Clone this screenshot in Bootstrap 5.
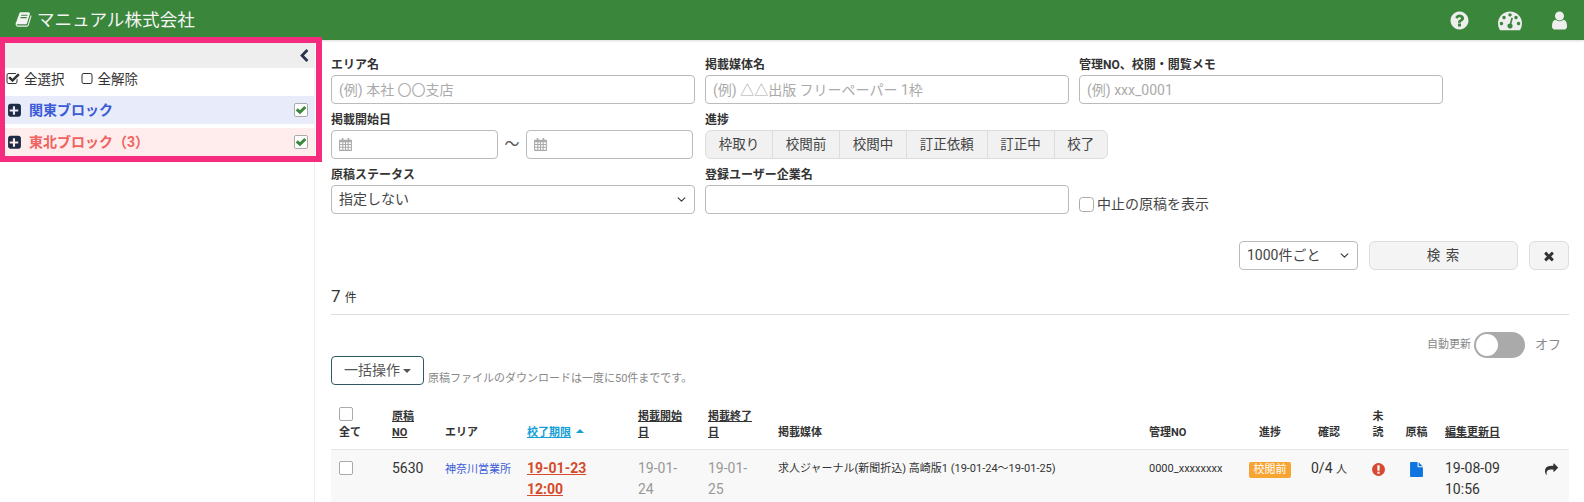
<!DOCTYPE html>
<html lang="ja">
<head>
    <meta charset="UTF-8">
    <title>マニュアル株式会社</title>
    <link href="https://cdn.jsdelivr.net/npm/bootstrap@5.3.0/dist/css/bootstrap.min.css" rel="stylesheet">
    <style>
        html, body { height: 502px; overflow: hidden; }
        body { font-family: Roboto, "Noto Sans CJK JP", sans-serif; font-size: 14px; color: #333; background: #fff; position: relative; }
        svg.ico { fill: currentColor; display: inline-block; flex: none; }

        /* header */
        .top-bar { background: #3a873c; height: 40px; padding: 0 14px 0 15px; color: #f4f4f4; box-shadow: 0 1px 2px rgba(0,0,0,.15); }
        .top-title { font-size: 17.6px; margin-left: 5px; letter-spacing: 0; }
        .top-icons { color: #eee; }
        .top-icons svg:nth-child(1) { margin-right: 28px; }
        .top-icons svg:nth-child(2) { margin-right: 27px; }

        /* side panel */
        .side-panel { width: 315px; height: 462px; border-right: 1px solid #eee; flex: none; padding-left: 5px; }
        .side-head { height: 25px; margin-top: 3px; background: #eee; color: #2b3350; padding-right: 3px; }
        .side-tools { height: 28px; font-size: 13.5px; color: #333; padding: 0 0 6px 1px; }
        .side-tools span { margin-right: 15px; }
        .block-row { height: 28px; padding: 0 6px 0 2px; font-size: 14px; font-weight: 700; }
        .block-row svg { color: #1f2a44; margin-right: 7px; }
        .block-blue { background: #e8ebfa; color: #3b5bd6; margin-bottom: 4px; }
        .block-red { background: #ffecec; color: #f0625f; }
        .green-tick { width: 14px; height: 14px; border: 1px solid #aaa; border-radius: 2px; background: #fff; color: #3a873c; }
        .block-row .green-tick svg { color: #3a873c; margin: 0; }
        /* annotation frame laid over the panel */
        .pink-frame { position: absolute; left: 0; top: 37px; width: 322px; height: 125px; border: 6px solid #f52c7e; border-left-width: 5px; pointer-events: none; }

        /* search form */
        .main-area { padding: 14px 15px 0 16px; min-width: 0; }
        .form-cols { display: grid; grid-template-columns: 364px 364px 364px; column-gap: 10px; }
        .field-cell { height: 55px; }
        .field-label { display: block; height: 21px; font-size: 12px; font-weight: 700; line-height: 22px; color: #333; }
        .main-area .form-control, .main-area .form-select { height: 29px; font-size: 14px; padding: 0 7px; border-color: #bbb; border-radius: 4px; color: #444; }
        .main-area .form-select { background-position: right 7px center; background-size: 11px 9px; }
        .main-area .form-control::placeholder { color: #aaa; }
        .date-box { position: relative; width: 167px; }
        .date-box .form-control { padding-left: 28px; }
        .date-box svg { position: absolute; left: 7px; top: 7px; color: #aaa; }
        .wave { width: 28px; text-align: center; font-size: 15px; color: #555; }
        .step-group { white-space: nowrap; }
        .step-group .btn { flex: none; height: 29px; font-size: 13.5px; padding: 0 12.75px; background: #f1f1f1; border-color: #ddd; color: #444; white-space: nowrap; }
        .stop-check { padding-top: 26px; font-size: 14px; color: #444; }
        .plain-box { width: 15px; height: 15px; margin: 0 3px 0 0; border-color: #aaa; border-radius: 2px; }

        .action-row { margin-top: 22px; }
        .action-row .form-select { width: 119px; }
        .search-btn { width: 149px; height: 29px; margin-left: 11px; padding: 0; font-size: 13.5px; background: #f4f4f4; border-color: #ddd; color: #444; letter-spacing: 1px; }
        .clear-btn { width: 40px; height: 29px; margin-left: 11px; padding: 0; background: #f4f4f4; border-color: #ddd; color: #333; }
        .count-line { margin-top: 16px; height: 28px; border-bottom: 1px solid #ddd; font-size: 17px; line-height: 20px; box-sizing: content-box; padding-bottom: 0; color: #333; }
        .count-line small { font-size: 12px; }

        .auto-line { margin-top: 17px; height: 26px; font-size: 11px; color: #888; padding-right: 8px; }
        .auto-switch { width: 51px; height: 26px; border-radius: 13px; background: #aaa; margin: 0 10px 0 3px; padding: 2px; }
        .auto-switch i { display: block; width: 22px; height: 22px; border-radius: 50%; background: #fff; }
        .auto-off { font-size: 13px; color: #888; }

        .bulk-line { height: 29px; margin-top: -2px; }
        .bulk-btn { width: 93px; height: 29px; padding: 0; font-size: 14px; border: 1px solid #2f5a63; border-radius: 4px; color: #555; background: #fff; }
        .bulk-note { font-size: 11px; color: #888; margin: 0 0 -2px 4px; align-self: flex-end; line-height: 16px; }
        .caret-down { display: inline-block; border: 4px solid transparent; border-top-color: #555; border-bottom: 0; vertical-align: 2px; margin-left: 3px; }

        /* list */
        .doc-table { table-layout: fixed; width: 1238px; margin: 18px 0 0; color: #333; font-size: 14px; }
        .doc-table th { font-size: 11px; line-height: 16px; font-weight: 700; padding: 4px 8px 8px; vertical-align: bottom; border-bottom: 1px solid #e6e6e6; color: #333; }
        .doc-table th u { text-underline-offset: 1px; }
        .doc-table td { background: #f8f8f8; padding: 8px; vertical-align: top; line-height: 21px; border: 0; box-shadow: none; }
        .doc-table .form-check-input { display: block; width: 14px; height: 14px; margin: 0; border-color: #aaa; border-radius: 2px; }
        .doc-table td .form-check-input { margin-top: 3px; }
        .doc-table th.sort-active { color: #14a0d6; }
        .doc-table .edit-cell { padding-left: 11px; padding-right: 0; }
        .sort-mark { display: inline-block; border: 4px solid transparent; border-bottom-color: #14a0d6; border-top: 0; vertical-align: 3px; margin-left: 5px; }
        .area-link { font-size: 11px; color: #3b5bd6; }
        .due-date { color: #d44a2b; font-weight: 700; text-decoration: underline; }
        .date-grey { color: #999; }
        .media-text { font-size: 11px; }
        .manage-no { font-size: 11px; }
        .step-tag { display: inline-block; width: 42px; height: 16px; background: #f6a432; border-radius: 2px; color: #fff; font-size: 11px; line-height: 16px; text-align: center; font-weight: 400; padding: 0; }
        .per-unit { font-size: 11px; }
        .ico-alert { color: #d64a32; }
        .ico-file { color: #0d74e0; }
    </style>
</head>
<body>

    <svg width="0" height="0" class="position-absolute">
        <symbol id="i-book" viewBox="0 0 1792 1792"><path d="M1703 478q40 57 18 129l-275 906q-19 64-76.5 107.5t-122.5 43.5h-923q-77 0-148.5-53.5t-99.5-131.5q-24-67-2-127 0-4 3-27t4-37q1-8-3-21.5t-3-19.5q2-11 8-21t16.5-23.5 16.5-23.5q23-38 45-91.5t30-91.5q3-10 .5-30t-.5-28q3-11 17-28t17-23q21-36 42-92t25-90q1-9-2.5-32t.5-28q4-13 22-30.5t22-22.5q19-26 42.5-84.5t27.5-96.5q1-8-3-25.5t-2-26.5q2-8 9-18t18-23 17-21q8-12 16.5-30.5t15-35 16-36 19.5-32 26.5-23.5 36-11.5 47.5 5.5l-1 3q38-9 51-9h761q74 0 114 56t18 130l-274 906q-36 119-71.5 153.5t-128.5 34.5h-869q-27 0-38 15-11 16-1 43 24 70 144 70h923q29 0 56-15.5t35-41.5l300-987q7-22 5-57 38 15 59 43zm-1064 2q-4 13 2 22.5t20 9.5h608q13 0 25.5-9.5t16.5-22.5l21-64q4-13-2-22.5t-20-9.5h-608q-13 0-25.5 9.5t-16.5 22.5zm-83 256q-4 13 2 22.5t20 9.5h608q13 0 25.5-9.5t16.5-22.5l21-64q4-13-2-22.5t-20-9.5h-608q-13 0-25.5 9.5t-16.5 22.5z"/></symbol>
        <symbol id="i-help" viewBox="0 0 1792 1792"><path d="M1024 1376v-192q0-14-9-23t-23-9h-192q-14 0-23 9t-9 23v192q0 14 9 23t23 9h192q14 0 23-9t9-23zm256-672q0-88-55.5-163t-138.5-116-170-41q-243 0-371 213-15 24 8 42l132 100q7 6 19 6 16 0 25-12 53-68 86-92 34-24 86-24 48 0 85.5 26t37.5 59q0 38-20 61t-68 45q-63 28-115.5 86.5t-52.5 125.5v36q0 14 9 23t23 9h192q14 0 23-9t9-23q0-19 21.5-49.5t54.5-49.5q32-18 49-28.5t46-35 44.5-48 28-60.5 12.5-81zm384 192q0 209-103 385.5t-279.5 279.5-385.5 103-385.5-103-279.5-279.5-103-385.5 103-385.5 279.5-279.5 385.5-103 385.5 103 279.5 279.5 103 385.5z"/></symbol>
        <symbol id="i-gauge" viewBox="0 0 1792 1792"><path d="M384 1152q0-53-37.5-90.5t-90.5-37.5-90.5 37.5-37.5 90.5 37.5 90.5 90.5 37.5 90.5-37.5 37.5-90.5zm192-448q0-53-37.5-90.5t-90.5-37.5-90.5 37.5-37.5 90.5 37.5 90.5 90.5 37.5 90.5-37.5 37.5-90.5zm428 481l101-382q6-26-7.5-48.5t-38.5-29.5-48 6.5-30 39.5l-101 382q-60 5-107 43.5t-63 98.5q-20 77 20 146t117 89 146-20 89-117q16-60-6-117t-72-91zm660-33q0-53-37.5-90.5t-90.5-37.5-90.5 37.5-37.5 90.5 37.5 90.5 90.5 37.5 90.5-37.5 37.5-90.5zm-640-640q0-53-37.5-90.5t-90.5-37.5-90.5 37.5-37.5 90.5 37.5 90.5 90.5 37.5 90.5-37.5 37.5-90.5zm448 192q0-53-37.5-90.5t-90.5-37.5-90.5 37.5-37.5 90.5 37.5 90.5 90.5 37.5 90.5-37.5 37.5-90.5zm320 448q0 261-141 483-19 29-54 29h-1402q-35 0-54-29-141-221-141-483 0-182 71-348t191-286 286-191 348-71 348 71 286 191 191 286 71 348z"/></symbol>
        <symbol id="i-user" viewBox="0 0 1792 1792"><path d="M1536 1399q0 109-62.5 187t-150.5 78h-854q-88 0-150.5-78t-62.5-187q0-85 8.5-160.5t31.5-152 58.5-131 94-89 134.5-34.5q131 128 313 128t313-128q76 0 134.5 34.5t94 89 58.5 131 31.5 152 8.5 160.5zm-256-887q0 159-112.5 271.5t-271.5 112.5-271.5-112.5-112.5-271.5 112.5-271.5 271.5-112.5 271.5 112.5 112.5 271.5z"/></symbol>
        <symbol id="i-back" viewBox="0 0 1792 1792"><path d="M1427 301l-531 531 531 531q19 19 19 45t-19 45l-166 166q-19 19-45 19t-45-19l-742-742q-19-19-19-45t19-45l742-742q19-19 45-19t45 19l166 166q19 19 19 45t-19 45z"/></symbol>
        <symbol id="i-checked" viewBox="0 0 1792 1792"><path d="M1472 930v318q0 119-84.5 203.5t-203.5 84.5h-832q-119 0-203.5-84.5t-84.5-203.5v-832q0-119 84.5-203.5t203.5-84.5h832q63 0 117 25 15 7 18 23 3 17-9 29l-49 49q-10 10-23 10-3 0-9-2-23-6-45-6h-832q-66 0-113 47t-47 113v832q0 66 47 113t113 47h832q66 0 113-47t47-113v-254q0-13 9-22l64-64q10-10 23-10 6 0 12 3 20 8 20 29zm231-489l-814 814q-24 24-57 24t-57-24l-430-430q-24-24-24-57t24-57l110-110q24-24 57-24t57 24l263 263 647-647q24-24 57-24t57 24l110 110q24 24 24 57t-24 57z"/></symbol>
        <symbol id="i-empty" viewBox="0 0 1792 1792"><path d="M1312 256h-832q-66 0-113 47t-47 113v832q0 66 47 113t113 47h832q66 0 113-47t47-113v-832q0-66-47-113t-113-47zm288 160v832q0 119-84.5 203.5t-203.5 84.5h-832q-119 0-203.5-84.5t-84.5-203.5v-832q0-119 84.5-203.5t203.5-84.5h832q119 0 203.5 84.5t84.5 203.5z"/></symbol>
        <symbol id="i-plus" viewBox="0 0 1792 1792"><path d="M1344 960v-128q0-26-19-45t-45-19h-320v-320q0-26-19-45t-45-19h-128q-26 0-45 19t-19 45v320h-320q-26 0-45 19t-19 45v128q0 26 19 45t45 19h320v320q0 26 19 45t45 19h128q26 0 45-19t19-45v-320h320q26 0 45-19t19-45zm320-576v960q0 119-84.5 203.5t-203.5 84.5h-960q-119 0-203.5-84.5t-84.5-203.5v-960q0-119 84.5-203.5t203.5-84.5h960q119 0 203.5 84.5t84.5 203.5z"/></symbol>
        <symbol id="i-tick" viewBox="0 0 16 16"><path d="M1 8.5 L3.8 5.8 L6.6 8.4 L12.4 2.6 L15.2 5.4 L6.6 13.6 Z"/></symbol>
        <symbol id="i-times" viewBox="0 0 1792 1792"><path d="M1490 1322q0 40-28 68l-136 136q-28 28-68 28t-68-28l-294-294-294 294q-28 28-68 28t-68-28l-136-136q-28-28-28-68t28-68l294-294-294-294q-28-28-28-68t28-68l136-136q28-28 68-28t68 28l294 294 294-294q28-28 68-28t68 28l136 136q28 28 28 68t-28 68l-294 294 294 294q28 28 28 68z"/></symbol>
        <symbol id="i-alert" viewBox="0 0 1792 1792"><path d="M896 128q209 0 385.5 103t279.5 279.5 103 385.5-103 385.5-279.5 279.5-385.5 103-385.5-103-279.5-279.5-103-385.5 103-385.5 279.5-279.5 385.5-103zm128 1247v-190q0-14-9-23.5t-22-9.5h-192q-13 0-23 10t-10 23v190q0 13 10 23t23 10h192q13 0 22-9.5t9-23.5zm-2-344l18-621q0-12-10-18-10-8-24-8h-220q-14 0-24 8-10 6-10 18l17 621q0 10 10 17.5t24 7.5h185q14 0 23.5-7.5t10.5-17.5z"/></symbol>
        <symbol id="i-file" viewBox="0 0 1792 1792"><path d="M1152 512v-472q22 14 36 28l408 408q14 14 28 36h-472zm-128 32q0 40 28 68t68 28h544v1056q0 40-28 68t-68 28h-1344q-40 0-68-28t-28-68v-1600q0-40 28-68t68-28h800v544z"/></symbol>
        <symbol id="i-share" viewBox="0 0 1792 1792"><path d="M1792 640q0 26-19 45l-512 512q-19 19-45 19t-45-19-19-45v-256h-224q-98 0-175.5 6t-154 21.5-133 42.5-105.5 69.5-80 101-48.5 138.5-17.5 181q0 55 5 123 0 6 2.5 23.5t2.5 26.5q0 15-8.5 25t-23.5 10q-16 0-28-17-7-9-13-22t-13.5-30-10.5-24q-127-285-127-451 0-199 53-333 162-403 875-403h224v-256q0-26 19-45t45-19 45 19l512 512q19 19 19 45z"/></symbol>
        <symbol id="i-cal" viewBox="0 0 14 14"><path d="M1 2.5h2.5V1h1.5v1.5h4V1h1.5v1.5H13V13H1zM2 5v1.5h2V5zm3 0v1.5h1.5V5zm2.5 0v1.5H9V5zM10 5v1.5h2V5zM2 7.5V9h2V7.5zm3 0V9h1.5V7.5zm2.5 0V9H9V7.5zm2.5 0V9h2V7.5zM2 10v2h2v-2zm3 0v2h1.5v-2zm2.5 0v2H9v-2zm2.5 0v2h2v-2z"/></symbol>
    </svg>

    <!-- Header -->
    <nav class="top-bar d-flex align-items-center justify-content-between">
        <div class="d-flex align-items-center">
            <svg class="ico" width="17" height="17"><use href="#i-book"/></svg>
            <span class="top-title">マニュアル株式会社</span>
        </div>
        <div class="top-icons d-flex align-items-center">
            <svg class="ico" width="21" height="21"><use href="#i-help"/></svg>
            <svg class="ico" width="24" height="24"><use href="#i-gauge"/></svg>
            <svg class="ico" width="21" height="21"><use href="#i-user"/></svg>
        </div>
    </nav>

    <div class="d-flex">
        <!-- Side panel -->
        <aside class="side-panel">
            <div class="side-head d-flex align-items-center justify-content-end">
                <svg class="ico" width="14" height="14"><use href="#i-back"/></svg>
            </div>
            <div class="side-tools d-flex align-items-center">
                <svg class="ico me-1" width="14" height="14"><use href="#i-checked"/></svg><span>全選択</span>
                <svg class="ico me-1" width="14" height="14"><use href="#i-empty"/></svg><span>全解除</span>
            </div>
            <div class="block-row block-blue d-flex align-items-center">
                <svg class="ico" width="15" height="15"><use href="#i-plus"/></svg>
                <span class="flex-grow-1">関東ブロック</span>
                <span class="green-tick d-flex align-items-center justify-content-center"><svg class="ico" width="12" height="12"><use href="#i-tick"/></svg></span>
            </div>
            <div class="block-row block-red d-flex align-items-center">
                <svg class="ico" width="15" height="15"><use href="#i-plus"/></svg>
                <span class="flex-grow-1">東北ブロック（3）</span>
                <span class="green-tick d-flex align-items-center justify-content-center"><svg class="ico" width="12" height="12"><use href="#i-tick"/></svg></span>
            </div>
        </aside>

        <!-- Main -->
        <main class="main-area flex-grow-1">
            <div class="form-cols">
                <div class="field-cell">
                    <label class="field-label">エリア名</label>
                    <input class="form-control" placeholder="(例) 本社 〇〇支店">
                </div>
                <div class="field-cell">
                    <label class="field-label">掲載媒体名</label>
                    <input class="form-control" placeholder="(例) △△出版 フリーペーパー 1枠">
                </div>
                <div class="field-cell">
                    <label class="field-label">管理NO、校閲・閲覧メモ</label>
                    <input class="form-control" placeholder="(例) xxx_0001">
                </div>

                <div class="field-cell">
                    <label class="field-label">掲載開始日</label>
                    <div class="d-flex align-items-center">
                        <div class="date-box"><svg class="ico" width="15" height="15"><use href="#i-cal"/></svg><input class="form-control"></div>
                        <span class="wave">〜</span>
                        <div class="date-box"><svg class="ico" width="15" height="15"><use href="#i-cal"/></svg><input class="form-control"></div>
                    </div>
                </div>
                <div class="field-cell">
                    <label class="field-label">進捗</label>
                    <div class="btn-group step-group">
                        <button class="btn" type="button">枠取り</button>
                        <button class="btn" type="button">校閲前</button>
                        <button class="btn" type="button">校閲中</button>
                        <button class="btn" type="button">訂正依頼</button>
                        <button class="btn" type="button">訂正中</button>
                        <button class="btn" type="button">校了</button>
                    </div>
                </div>
                <div class="field-cell"></div>

                <div class="field-cell">
                    <label class="field-label">原稿ステータス</label>
                    <select class="form-select"><option>指定しない</option></select>
                </div>
                <div class="field-cell">
                    <label class="field-label">登録ユーザー企業名</label>
                    <input class="form-control">
                </div>
                <div class="field-cell stop-check d-flex align-items-center">
                    <input class="form-check-input plain-box" type="checkbox"><span>中止の原稿を表示</span>
                </div>
            </div>

            <div class="action-row d-flex justify-content-end">
                <select class="form-select"><option>1000件ごと</option></select>
                <button class="btn search-btn" type="button">検 索</button>
                <button class="btn clear-btn d-flex align-items-center justify-content-center" type="button"><svg class="ico" width="14" height="14"><use href="#i-times"/></svg></button>
            </div>

            <div class="count-line">7 <small>件</small></div>

            <div class="auto-line d-flex align-items-center justify-content-end">
                <span>自動更新</span>
                <span class="auto-switch"><i></i></span>
                <span class="auto-off">オフ</span>
            </div>

            <div class="bulk-line d-flex">
                <button class="btn bulk-btn" type="button">一括操作<span class="caret-down"></span></button>
                <span class="bulk-note">原稿ファイルのダウンロードは一度に50件までです。</span>
            </div>

            <table class="table doc-table">
                <colgroup>
                    <col style="width:53px"><col style="width:53px"><col style="width:82px"><col style="width:111px"><col style="width:70px"><col style="width:70px"><col style="width:371px"><col style="width:98px"><col style="width:62px"><col style="width:56px"><col style="width:42px"><col style="width:35px"><col style="width:100px"><col style="width:35px">
                </colgroup>
                <thead>
                    <tr>
                        <th><input class="form-check-input mb-1" type="checkbox">全て</th>
                        <th><u>原稿<br>NO</u></th>
                        <th>エリア</th>
                        <th class="sort-active"><u>校了期限</u><span class="sort-mark"></span></th>
                        <th><u>掲載開始<br>日</u></th>
                        <th><u>掲載終了<br>日</u></th>
                        <th>掲載媒体</th>
                        <th>管理NO</th>
                        <th class="text-center">進捗</th>
                        <th class="text-center">確認</th>
                        <th class="text-center">未<br>読</th>
                        <th class="text-center px-0">原稿</th>
                        <th class="edit-cell"><u>編集更新日</u></th>
                        <th></th>
                    </tr>
                </thead>
                <tbody>
                    <tr>
                        <td><input class="form-check-input" type="checkbox"></td>
                        <td>5630</td>
                        <td class="pe-0"><a class="area-link text-decoration-none" href="#">神奈川営業所</a></td>
                        <td><span class="due-date">19-01-23<br>12:00</span></td>
                        <td class="date-grey">19-01-24</td>
                        <td class="date-grey">19-01-25</td>
                        <td class="media-text">求人ジャーナル(新聞折込) 高崎版1 (19-01-24〜19-01-25)</td>
                        <td class="manage-no">0000_xxxxxxxx</td>
                        <td class="text-center"><span class="step-tag">校閲前</span></td>
                        <td class="text-center px-0">0/4 <span class="per-unit">人</span></td>
                        <td class="text-center px-0"><svg class="ico ico-alert" width="15" height="15"><use href="#i-alert"/></svg></td>
                        <td class="text-center px-0"><svg class="ico ico-file" width="15" height="15"><use href="#i-file"/></svg></td>
                        <td class="edit-cell">19-08-09<br>10:56</td>
                        <td class="text-center px-0"><svg class="ico" width="13" height="13"><use href="#i-share"/></svg></td>
                    </tr>
                </tbody>
            </table>
        </main>
    </div>

    <!-- annotation frame -->
    <div class="pink-frame"></div>

    <script src="https://cdn.jsdelivr.net/npm/bootstrap@5.3.0/dist/js/bootstrap.bundle.min.js"></script>
</body>
</html>
